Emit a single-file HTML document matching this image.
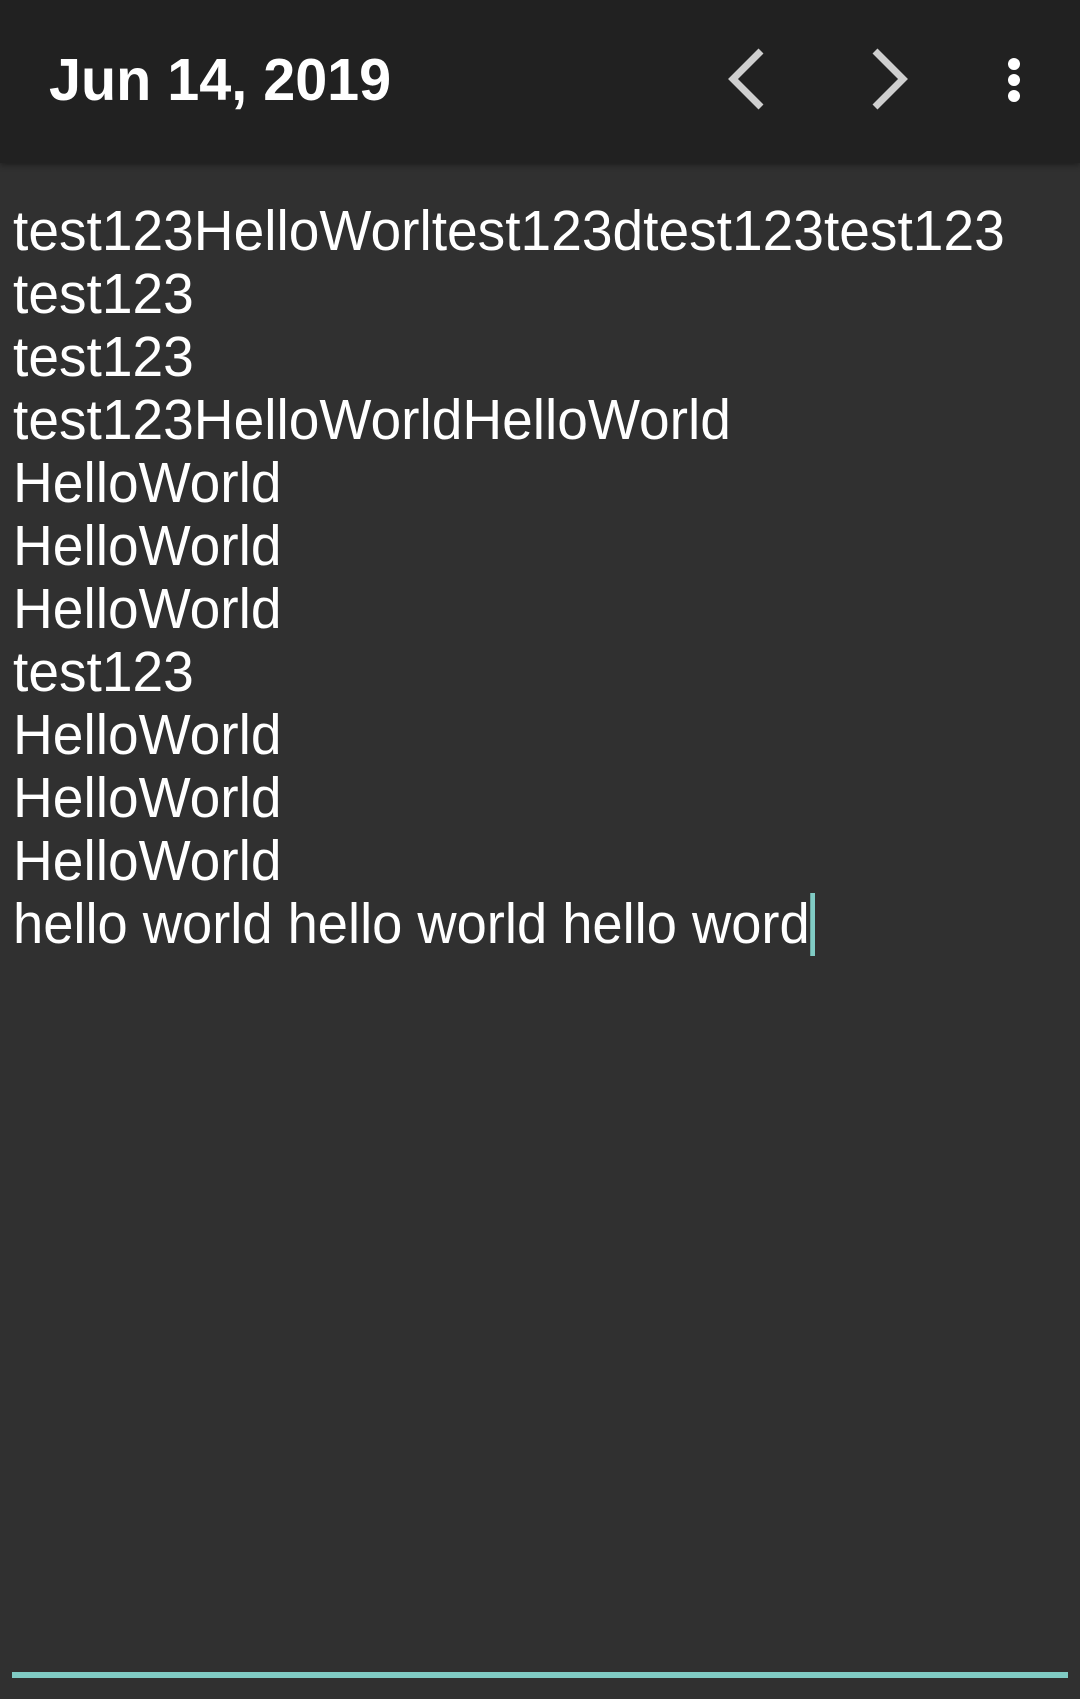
<!DOCTYPE html>
<html><head><style>
html,body{margin:0;padding:0;}
body{width:1080px;height:1699px;background:#303030;position:relative;overflow:hidden;font-family:"Liberation Sans",sans-serif;color:#fff;}
.bar{position:absolute;left:0;top:0;width:1080px;height:163px;background:#212121;box-shadow:0 2px 6px rgba(0,0,0,.4);}
.title{position:absolute;left:49px;top:45px;font-size:59px;font-weight:bold;line-height:70px;transform:scaleX(0.975);transform-origin:left;}
.txt{position:absolute;left:13px;top:200px;font-size:57px;line-height:63px;white-space:pre;transform:scaleX(0.967);transform-origin:left top;}
.last{display:inline-block;transform:scaleX(0.985);transform-origin:left;}
.cur{display:inline-block;width:5px;height:63px;background:#80cbc4;vertical-align:top;margin-left:1px;}
.line{position:absolute;left:12px;top:1672px;width:1056px;height:6px;background:#80cbc4;}
</style></head><body>
<div class="bar">
<div class="title">Jun 14, 2019</div>
<svg style="position:absolute;left:0;top:0" width="1080" height="163">
<polyline points="761,51 733,79 761,107" fill="none" stroke="#cfcfcf" stroke-width="7"/>
<polyline points="875,51 903,79 875,107" fill="none" stroke="#cfcfcf" stroke-width="7"/>
<circle cx="1014" cy="64" r="6" fill="#fff"/>
<circle cx="1014" cy="80" r="6" fill="#fff"/>
<circle cx="1014" cy="96" r="6" fill="#fff"/>
</svg>
</div>
<div class="txt">test123HelloWorltest123dtest123test123
test123
test123
test123HelloWorldHelloWorld
HelloWorld
HelloWorld
HelloWorld
test123
HelloWorld
HelloWorld
HelloWorld
<span class="last">hello world hello world hello word<span class="cur"></span></span></div>
<div class="line"></div>
</body></html>
